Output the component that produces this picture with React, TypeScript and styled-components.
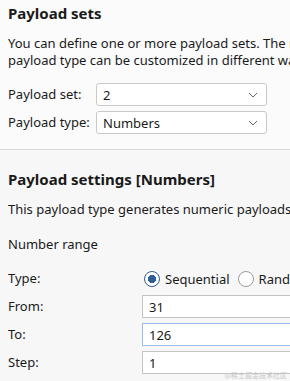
import React from "react";
import styled, { createGlobalStyle } from "styled-components";

const GlobalStyle = createGlobalStyle`
	html, body {
		margin: 0;
		padding: 0;
		background: #f7f7f7;
		overflow: hidden;
	}
	body {
		font-family: "Noto Sans", "Open Sans", sans-serif;
		color: #1a1a1a;
	}
`;

const Chevron = () => (
	<svg width="10" height="6" viewBox="0 0 10 6" fill="none">
		<path d="M1 1l4 4 4-4" stroke="#666" strokeWidth="1" />
	</svg>
);

const App = (): JSX.Element => {
	return (
		<Page>
			<GlobalStyle />
			<Section.Top>
				<Section.Heading>Payload sets</Section.Heading>
				<Section.Desc>
					You can define one or more payload sets. The number of payload sets depends on the attack type defined in the Positions tab.
					<br />
					payload type can be customized in different ways.
				</Section.Desc>
				<Form.Grid $label={88}>
					<Form.Label>Payload set:</Form.Label>
					<Form.Select>
						<span>2</span>
						<Chevron />
					</Form.Select>
					<Form.Label>Payload type:</Form.Label>
					<Form.Select>
						<span>Numbers</span>
						<Chevron />
					</Form.Select>
				</Form.Grid>
			</Section.Top>

			<Divider />

			<Section.Bottom>
				<Section.Heading>Payload settings [Numbers]</Section.Heading>
				<Section.Desc>This payload type generates numeric payloads within a given range and in a specified format.</Section.Desc>
				<Section.Sub>Number range</Section.Sub>
				<Form.Grid $label={134}>
					<Form.Label>Type:</Form.Label>
					<Radio.Group>
						<Radio.Item>
							<Radio.Circle $checked />
							Sequential
						</Radio.Item>
						<Radio.Item>
							<Radio.Circle />
							Random
						</Radio.Item>
					</Radio.Group>
					<Form.Label>From:</Form.Label>
					<Form.Input>31</Form.Input>
					<Form.Label>To:</Form.Label>
					<Form.Input $focused>126</Form.Input>
					<Form.Label>Step:</Form.Label>
					<Form.Input>1</Form.Input>
				</Form.Grid>
			</Section.Bottom>

			<Watermark>@稀土掘金技术社区</Watermark>
		</Page>
	);
};

export default App;

const Page = styled.div`
	position: relative;
	width: 290px;
	height: 381px;
	overflow: hidden;
	font-size: 13px;
`;

const Section = {
	Top: styled.div`
		padding: 3px 8px 0;
		height: 146px;
		background: #fbfbfb;
	`,

	Bottom: styled.div`
		padding: 19px 8px 0;
		width: 560px;
	`,

	Heading: styled.h2`
		margin: 0;
		font-size: 15px;
		font-weight: 700;
		line-height: 20px;
		white-space: nowrap;
	`,

	Desc: styled.p`
		margin: 12px 0 0;
		line-height: 17px;
		white-space: nowrap;
	`,

	Sub: styled.div`
		margin-top: 18px;
		line-height: 17px;
	`,
};

const Form = {
	Grid: styled.div<{ $label: number }>`
		display: grid;
		grid-template-columns: ${(p) => p.$label}px 171px;
		grid-auto-rows: 23px;
		row-gap: 5px;
		align-items: center;
		margin-top: 14px;
	`,

	Label: styled.span`
		line-height: 17px;
		white-space: nowrap;
	`,

	Select: styled.div`
		display: flex;
		align-items: center;
		justify-content: space-between;
		height: 23px;
		box-sizing: border-box;
		padding: 0 8px 0 6px;
		background: #fff;
		border: 1px solid #c9c9c9;
		border-radius: 3px;
	`,

	Input: styled.div<{ $focused?: boolean }>`
		display: flex;
		align-items: center;
		width: 400px;
		height: 23px;
		box-sizing: border-box;
		padding: 0 6px;
		background: #fff;
		border: 1px solid ${(p) => (p.$focused ? "#9cbde3" : "#c4c4c4")};
	`,
};

const Radio = {
	Group: styled.div`
		display: flex;
		gap: 8px;
		padding-left: 2px;
		white-space: nowrap;
	`,

	Item: styled.label`
		display: flex;
		align-items: center;
		gap: 5px;
	`,

	Circle: styled.span<{ $checked?: boolean }>`
		width: 16px;
		height: 16px;
		box-sizing: border-box;
		border-radius: 50%;
		background: ${(p) => (p.$checked ? "radial-gradient(circle, #2f5e93 0 3.8px, #fff 4.4px)" : "#fff")};
		border: 1px solid ${(p) => (p.$checked ? "#2f5e93" : "#9a9a9a")};
	`,
};

const Divider = styled.div`
	height: 1px;
	background: #d8d8d8;
`;

const Watermark = styled.div`
	position: absolute;
	right: 3px;
	bottom: 1px;
	font-family: "Noto Sans CJK SC", sans-serif;
	font-size: 7px;
	color: #c8c8c8;
`;
